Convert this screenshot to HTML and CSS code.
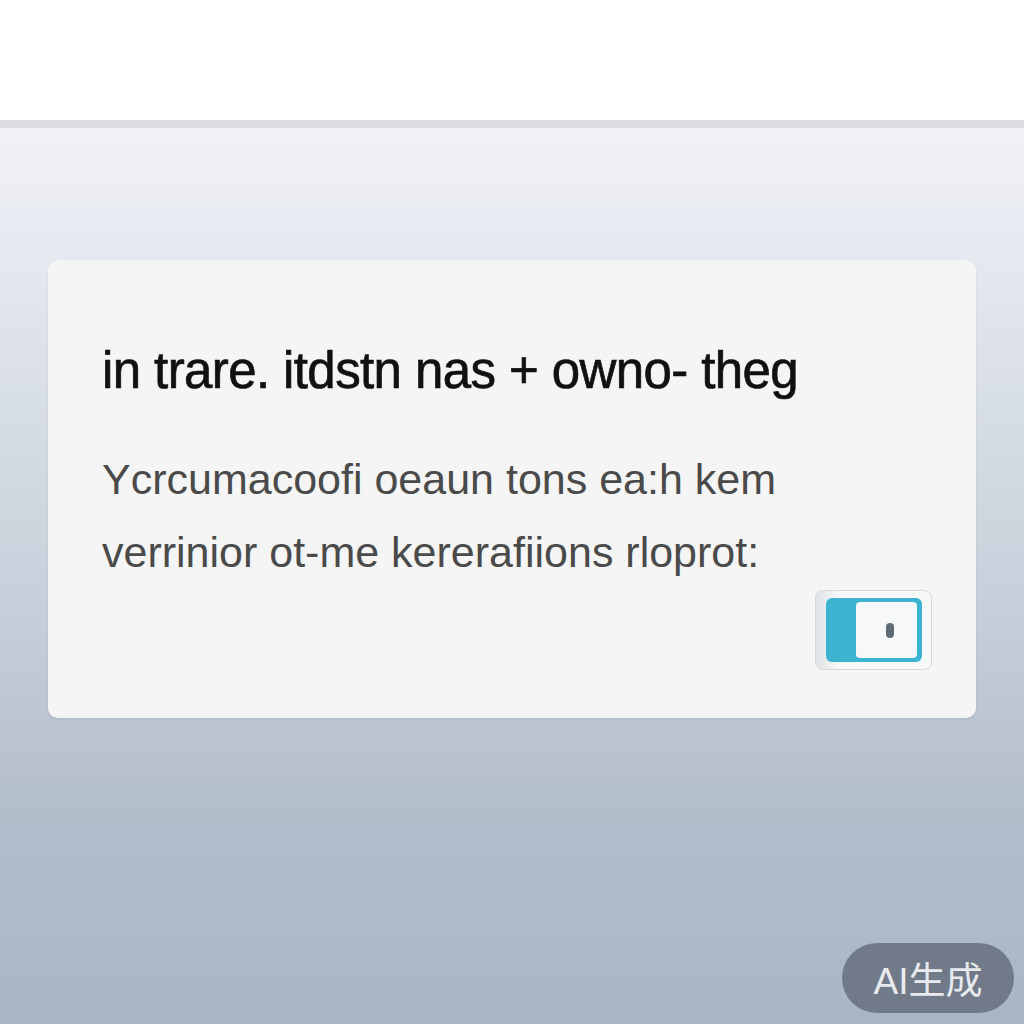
FILE: index.html
```html
<!DOCTYPE html>
<html lang="en">
<head>
    <meta charset="UTF-8">
    <meta name="viewport" content="width=device-width, initial-scale=1.0">
    <title>Notice</title>
    <link rel="stylesheet" href="styles.css">
</head>
<body>
    <div class="topbar"></div>
    <div class="stage">
        <div class="card">
            <h1>in trare. itdstn nas + owno- theg</h1>
            <p>Ycrcumacoofi oeaun tons ea:h kem</p>
            <p>verrinior ot-me kererafiions rloprot:</p>
            <div class="card-footer">
                <div class="toggle">
                    <div class="toggle-track">
                        <div class="toggle-knob"><span></span></div>
                    </div>
                </div>
            </div>
        </div>
    </div>
    <div class="badge">AI生成</div>
</body>
</html>
```
FILE: styles.css
```css
html, body { margin: 0; height: 100%; }
body {
    font-family: "Liberation Sans", Arial, sans-serif;
    background: #fff;
    overflow: hidden;
}
.topbar { height: 120px; background: #fff; }
.stage {
    height: 904px;
    padding: 132px 48px 0;
    box-sizing: border-box;
    border-top: 8px solid #dcdde0;
    background: linear-gradient(to bottom, #f1f2f6 0%, #e4e8ef 15%, #c9d1dc 50%, #b4bfcc 75%, #a9b4c6 100%);
}
.card {
    background: #f5f5f5;
    border-radius: 10px;
    height: 458px;
    box-sizing: border-box;
    padding: 81px 44px 0 54px;
    box-shadow: 0 1px 3px rgba(0, 0, 0, 0.08);
}
.card h1 {
    margin: 0 0 56px;
    font-size: 51px;
    font-weight: normal;
    letter-spacing: -0.6px;
    color: #111;
    -webkit-text-stroke: 0.7px #111;
}
.card p {
    margin: 0 0 27px;
    font-size: 43px;
    line-height: 46px;
    color: #4a4a4a;
}
.card-footer { display: flex; justify-content: flex-end; margin-top: -12px; }
.toggle {
    width: 117px;
    height: 80px;
    box-sizing: border-box;
    border: 1px solid #d6d8da;
    border-radius: 8px;
    background: linear-gradient(to right, #dfe3e5, #f7f8f8 20%);
    display: flex;
    align-items: center;
    justify-content: flex-end;
    padding-right: 9px;
}
.toggle-track {
    width: 96px;
    height: 64px;
    background: #3bb3d1;
    border-radius: 6px;
    display: flex;
    align-items: center;
    justify-content: flex-end;
    padding-right: 5px;
    box-sizing: border-box;
}
.toggle-knob {
    width: 61px;
    height: 56px;
    background: #f7f8f9;
    border-radius: 4px;
    display: flex;
    align-items: center;
    justify-content: center;
}
.toggle-knob span {
    width: 8px;
    height: 15px;
    border-radius: 4px;
    background: #5f6b74;
    margin-left: 6px;
}
.badge {
    position: absolute;
    right: 10px;
    bottom: 11px;
    width: 172px;
    height: 70px;
    border-radius: 35px;
    background: rgba(105, 115, 130, 0.9);
    color: #e8eaee;
    font-family: "Liberation Sans", "Noto Sans CJK SC", sans-serif;
    font-size: 37px;
    display: flex;
    align-items: center;
    justify-content: center;
}
```
